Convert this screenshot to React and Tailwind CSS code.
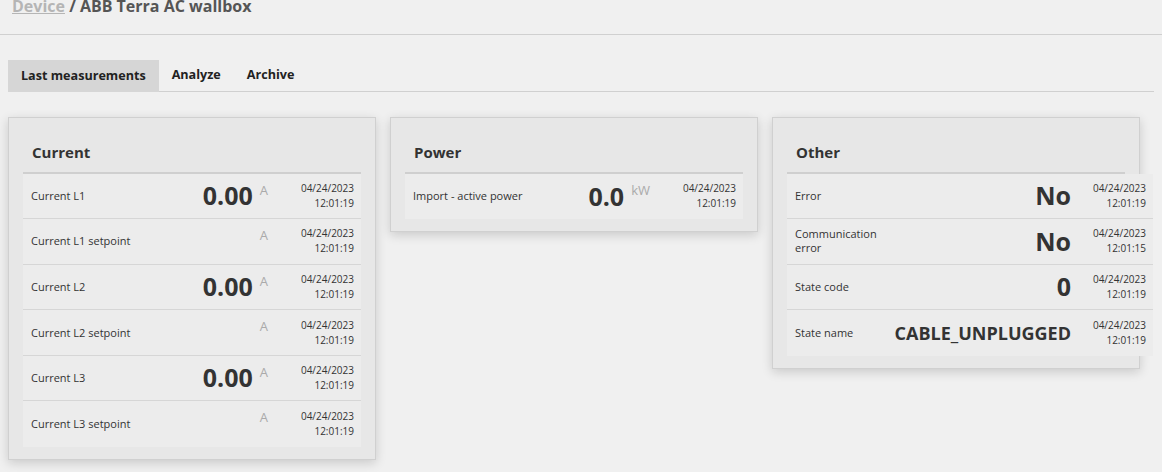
import React from "react";

const DATE = "04/24/2023";

function Row({ label, value, unit, time = "12:01:19", big = true, labelW, noUnit, last }) {
  return (
    <div
      className={`flex items-stretch h-[45.6px] bg-[#ececec] ${last ? "" : "border-b border-[#d6d6d6]"}`}
    >
      <div
        className={`${labelW ? labelW : "flex-1"} flex items-center pl-[8px] pr-[6px] text-[11px] leading-[14px] text-[#333]`}
      >
        {label}
      </div>
      <div
        className={`${labelW ? "flex-1" : ""} flex items-center justify-end font-bold text-[#333] whitespace-nowrap ${big ? "text-[25px]" : "text-[18px]"}`}
      >
        {value}
      </div>
      {!noUnit && (
        <div className="pl-[7px] pr-[11px] pt-[7px] text-[13px] text-[#aaaaaa] leading-normal min-w-[18px]">
          {unit}
        </div>
      )}
      <div className="w-[82px] flex flex-col justify-center items-end pr-[7px] text-[10px] leading-[15px] text-[#333]">
        <div>{DATE}</div>
        <div>{time}</div>
      </div>
    </div>
  );
}

function Card({ title, children, rowsW }) {
  return (
    <div className="w-[368px] shrink-0 border border-[#d0d0d0] bg-[#e7e7e7] px-[14px] pt-[14px] pb-[12px] shadow-[0_3px_10px_rgba(0,0,0,0.16)]">
      <div className="h-[39.5px] flex items-center px-[9px] text-[15px] font-bold text-[#333]">
        {title}
      </div>
      <div className="border-b-2 border-[#cfcfcf]" />
      <div className={rowsW ? rowsW : ""}>{children}</div>
    </div>
  );
}

export default function App() {
  return (
    <div
      className="min-h-[472px] bg-[#f0f0f0] text-[#333] flow-root"
      style={{ fontFamily: '"Open Sans", "Liberation Sans", sans-serif' }}
    >
      <div className="h-[35px] border-b border-[#d0d0d0] px-[12px]">
        <div className="relative -top-[2px] text-[16px] leading-[16px] font-bold text-[#555]">
          <span className="text-[#b5b5b5] underline">Device</span> / ABB Terra AC wallbox
        </div>
      </div>

      <div className="mt-[25px] mx-[8px] flex border-b border-[#d0d0d0] h-[32px]">
        <div className="h-[32px] -mb-px bg-[#d6d6d6] px-[13px] flex items-center text-[12.6px] font-bold text-[#222]">
          Last measurements
        </div>
        <div className="px-[13px] flex items-center text-[12.6px] font-bold text-[#222]">Analyze</div>
        <div className="px-[13px] flex items-center text-[12.6px] font-bold text-[#222]">Archive</div>
      </div>

      <div className="mt-[25px] ml-[8px] flex items-start gap-[14px]">
        <Card title="Current">
          <Row label="Current L1" value="0.00" unit="A" />
          <Row label="Current L1 setpoint" value="" unit="A" />
          <Row label="Current L2" value="0.00" unit="A" />
          <Row label="Current L2 setpoint" value="" unit="A" />
          <Row label="Current L3" value="0.00" unit="A" />
          <Row label="Current L3 setpoint" value="" unit="A" last />
        </Card>
        <Card title="Power">
          <Row label="Import - active power" value="0.0" unit="kW" last />
        </Card>
        <Card title="Other" rowsW="w-[366px] relative">
          <Row label="Error" value="No" noUnit labelW="w-[100px]" />
          <Row label="Communication error" value="No" noUnit labelW="w-[100px]" time="12:01:15" />
          <Row label="State code" value="0" noUnit labelW="w-[100px]" />
          <Row label="State name" value="CABLE_UNPLUGGED" noUnit labelW="w-[100px]" big={false} last />
        </Card>
      </div>
    </div>
  );
}
